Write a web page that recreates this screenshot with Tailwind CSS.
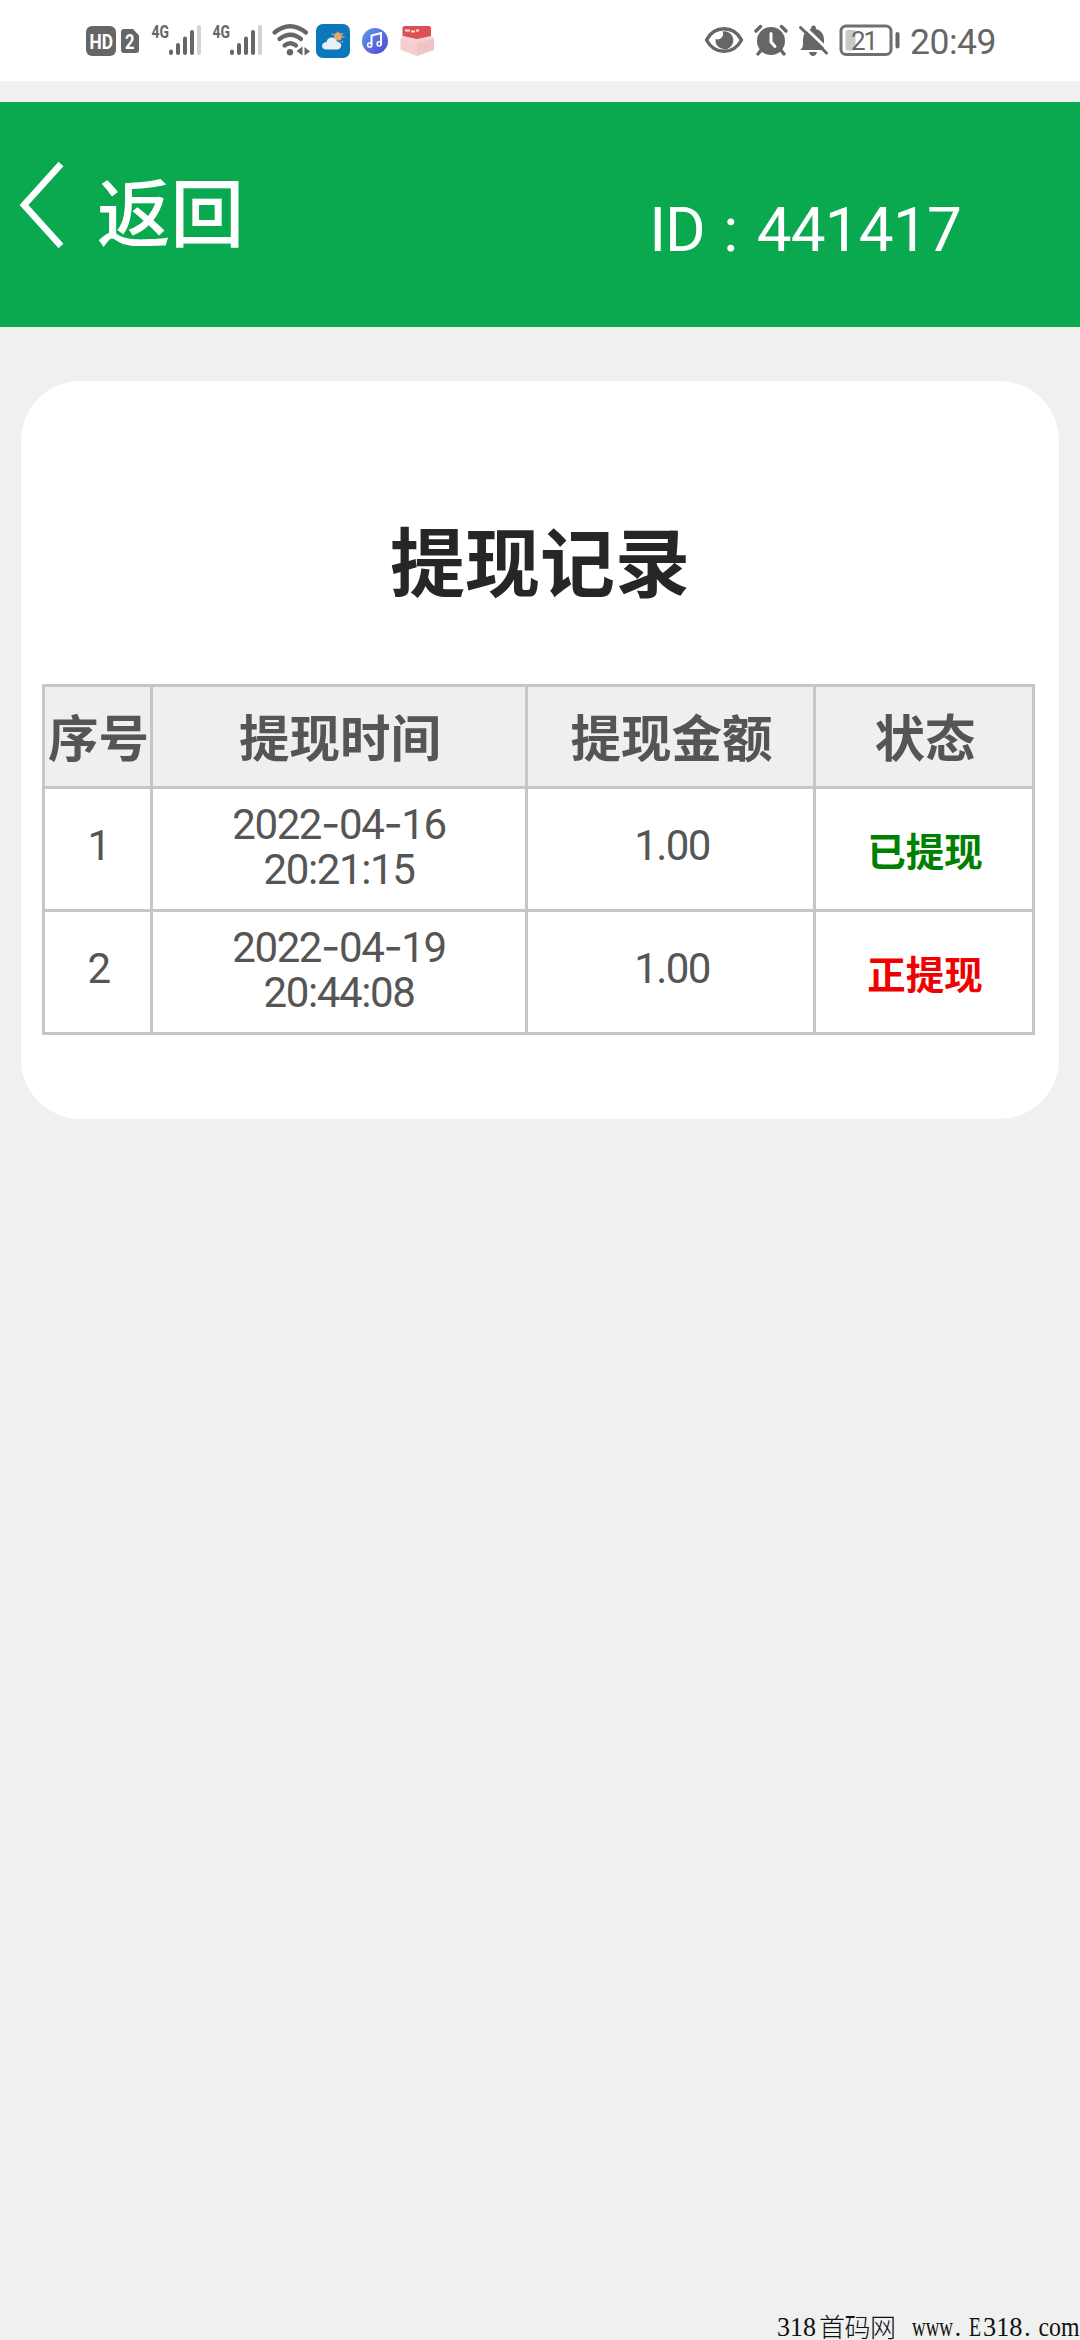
<!DOCTYPE html>
<html lang="zh-CN">
<head>
<meta charset="utf-8">
<title>提现记录</title>
<script src="https://cdn.jsdelivr.net/npm/@tailwindcss/browser@4"></script>
</head>
<body class="w-[1080px] h-[2340px] overflow-hidden bg-[#f0f0f0] flex flex-col font-[Roboto,'Noto_Sans_CJK_SC',sans-serif] text-[#555]">

<!-- Status bar -->
<div class="h-[81px] shrink-0 bg-white flex justify-between pt-[10px] pl-[80px] pr-[80px]">
  <div class="flex">
    <svg width="65" height="60" viewBox="80 10 65 60">
      <rect x="86" y="26" width="30" height="30" rx="6" fill="#666"/>
      <text x="89.500" y="48.500" font-size="19.500" font-weight="700" fill="#fff" textLength="23.500" lengthAdjust="spacingAndGlyphs">HD</text>
      <path d="M124 29h9l6 6.500V50a3 3 0 0 1-3 3h-12a3 3 0 0 1-3-3V32a3 3 0 0 1 3-3z" fill="#666"/>
      <text x="125" y="48.500" font-size="19.500" font-weight="700" fill="#fff" textLength="9.500" lengthAdjust="spacingAndGlyphs">2</text>
    </svg>
    <svg width="61" height="60" viewBox="145 10 61 60">
      <text x="151.500" y="38" font-size="17.500" font-weight="700" fill="#666" textLength="17.500" lengthAdjust="spacingAndGlyphs">4G</text>
      <g fill="#666"><rect x="169" y="49.500" width="4" height="5.500" rx="2"/><rect x="176" y="43" width="4" height="12" rx="2"/><rect x="183" y="36.500" width="4" height="18.500" rx="2"/><rect x="190" y="30" width="4" height="25" rx="2"/></g>
      <rect x="197" y="25" width="4" height="30" rx="2" fill="#d2d2d2"/>
    </svg>
    <svg width="61" height="60" viewBox="145 10 61 60">
      <text x="151.500" y="38" font-size="17.500" font-weight="700" fill="#666" textLength="17.500" lengthAdjust="spacingAndGlyphs">4G</text>
      <g fill="#666"><rect x="169" y="49.500" width="4" height="5.500" rx="2"/><rect x="176" y="43" width="4" height="12" rx="2"/><rect x="183" y="36.500" width="4" height="18.500" rx="2"/><rect x="190" y="30" width="4" height="25" rx="2"/></g>
      <rect x="197" y="25" width="4" height="30" rx="2" fill="#d2d2d2"/>
    </svg>
    <svg width="45" height="60" viewBox="267 10 45 60">
      <g fill="none" stroke="#666" stroke-width="4.200" stroke-linecap="round"><path d="M274.500 32.500q15.500-12.500 31.500 0"/><path d="M279.500 39q11-8.500 21.500 0"/><path d="M284.500 45.500q5.700-4.500 11.500 0"/></g>
      <circle cx="290" cy="52.300" r="3.200" fill="#666"/>
      <path d="M302.500 46.500v9l-6-4.500zM304.500 47l5.500 4.500-5.500 4z" fill="#666"/>
    </svg>
    <svg width="42" height="60" viewBox="312 10 42 60">
      <rect x="316" y="24" width="34" height="34" rx="7" fill="#0b77bd"/>
      <g stroke="#cfa57c" stroke-width="1.300"><path d="M338 31.500v2M332 33.500l1.500 1.500M343 33l-1.200 1.500M342.500 37h2M341.500 41l1.500 1.500"/></g>
      <circle cx="338" cy="36.500" r="4" fill="#e2a873"/>
      <path d="M326.500 49.500c-6 0-6-7 0-7.500 1-6 8.500-6 10.500-.5 6 .5 5.500 8 0 8z" fill="#e8f0f5"/>
    </svg>
    <svg width="40" height="60" viewBox="354 10 40 60">
      <defs><linearGradient id="note" x1="0" y1="0" x2="1" y2="1"><stop offset="0" stop-color="#5a9be8"/><stop offset="1" stop-color="#5547cf"/></linearGradient></defs>
      <circle cx="375" cy="41" r="13" fill="url(#note)"/>
      <path d="M371.500 45V35.500l9.500-2.500v11" fill="none" stroke="#fff" stroke-width="1.900"/>
      <circle cx="369.700" cy="45" r="2.100" fill="none" stroke="#fff" stroke-width="1.500"/><circle cx="379.200" cy="43.800" r="2.100" fill="none" stroke="#fff" stroke-width="1.500"/>
    </svg>
    <svg width="46" height="60" viewBox="394 10 46 60">
      <path d="M402.500 40V28q0-2 2-2h24.500q2 0 2 2v12z" fill="#dc5055"/>
      <path d="M405 30.500h5m1 1h4m1-1h3" stroke="#f8dcdc" stroke-width="1.800"/>
      <path d="M400.500 39l2.500-3 14 4.500v15.500l-16.500-6z" fill="#f4cfcf"/><path d="M434 39l-3-3-14 4.500v15.500l17-6z" fill="#efc4c5"/>
      <path d="M403 36l14 3 14-3 3 3-17 4-16.500-4z" fill="#f5d3d3"/>
    </svg>
  </div>
  <div class="flex">
    <svg width="47" height="60" viewBox="698 10 47 60">
      <path d="M704.500 40c8-15 27-15 35 0-8 15-27 15-35 0z" fill="none" stroke="#666" stroke-width="3.400" stroke-linejoin="round"/>
      <path d="M720.500 31.500a9 9 0 1 1-7 7.500 5.500 5.500 0 0 0 7-7.500z" fill="#666"/>
    </svg>
    <svg width="46" height="60" viewBox="745 10 46 60">
      <circle cx="769" cy="41" r="14" fill="#666"/>
      <path d="M754 31l4.500-4.500M784 31l-4.500-4.500" stroke="#666" stroke-width="3.400" stroke-linecap="round"/>
      <path d="M760 49l-4 5M778 49l4 5" stroke="#666" stroke-width="3.400" stroke-linecap="round"/>
      <path d="M769 33.500v8.500l4 4.500" fill="none" stroke="#fff" stroke-width="3" stroke-linecap="round" stroke-linejoin="round"/>
    </svg>
    <svg width="41" height="60" viewBox="791 10 41 60">
      <path d="M798 50c3-2 3-4 3-8 0-6 1-9 4-11q2-1.500 4-2 0-3.500 2.500-3.500t2.500 3.500c6 2 8 6 8 11v10z" fill="#666"/>
      <path d="M807 52h8q-1 4-4 4t-4-4z" fill="#666"/>
      <path d="M801 25.500l28 27" stroke="#fff" stroke-width="3"/>
      <path d="M798.500 27.500l26 25.500" stroke="#666" stroke-width="3" stroke-linecap="round"/>
    </svg>
    <svg width="74" height="60" viewBox="832 10 74 60">
      <rect x="839" y="26" width="50" height="28.500" rx="5" fill="#fff" stroke="#707070" stroke-width="3"/>
      <rect x="843.500" y="30" width="10" height="20.500" rx="2" fill="#c8c8c8"/>
      <text x="849" y="49.500" font-size="26" font-weight="400" fill="#666" textLength="27" lengthAdjust="spacing">21</text>
      <rect x="893.500" y="32" width="4" height="16.500" rx="2" fill="#666"/>
    </svg>
    <div class="w-[92px] pl-[2px] pt-[12px] text-[35.5px] leading-[40px] text-[#666] tracking-[-0.5px] whitespace-nowrap">20:49</div>
  </div>
</div>

<!-- Header -->
<header class="mt-[21px] h-[225px] shrink-0 bg-[#0aa84f] text-white flex items-start">
  <svg class="ml-[18px] mt-[54px]" width="50" height="98" viewBox="18 156 50 98" fill="none" stroke="#fff" stroke-width="6.500"><path d="M61 164L24 205l37 41"/></svg>
  <div class="ml-[29px] mt-[69px] text-[73.5px] leading-[90px] font-medium">返回</div>
  <div class="ml-auto mr-[119px] mt-[92px] text-[62px] leading-[72px] flex">
    <span class="tracking-[-1px]">ID</span><span class="w-[52px] text-center">:</span><span class="tracking-[-0.8px]">441417</span>
  </div>
</header>

<!-- Records card -->
<main class="mt-[54px] mx-[21px] h-[738px] shrink-0 rounded-[60px] bg-white px-[21px]">
  <h1 class="pt-[134px] h-[303px] text-[75px] leading-[100px] font-bold text-center text-[#262626]">提现记录</h1>
  <table class="w-[993px] border-separate border-spacing-0 table-fixed border-t-3 border-l-3 border-[#c6c6c6] text-center">
    <colgroup><col class="w-[108px]"><col class="w-[375px]"><col class="w-[288px]"><col class="w-[219px]"></colgroup>
    <thead>
      <tr class="h-[102px] bg-[#efefef] text-[50.5px] leading-[60px] font-bold whitespace-nowrap">
        <th class="border-r-3 border-b-3 border-[#c6c6c6] p-0 pt-[7px] pl-[2px]">序号</th>
        <th class="border-r-3 border-b-3 border-[#c6c6c6] p-0 pt-[7px] pl-[2px]">提现时间</th>
        <th class="border-r-3 border-b-3 border-[#c6c6c6] p-0 pt-[7px] pl-[2px]">提现金额</th>
        <th class="border-r-3 border-b-3 border-[#c6c6c6] p-0 pt-[7px] pl-[2px]">状态</th>
      </tr>
    </thead>
    <tbody class="text-[42px] leading-[45px] tracking-[-1.4px]">
      <tr class="h-[123px]">
        <td class="border-r-3 border-b-3 border-[#c6c6c6] p-0 pb-[7px] pl-[2px]">1</td>
        <td class="border-r-3 border-b-3 border-[#c6c6c6] p-0 pb-[5px]">2022<span class="font-[Inter]">-</span>04<span class="font-[Inter]">-</span>16<br>20:21:15</td>
        <td class="border-r-3 border-b-3 border-[#c6c6c6] p-0 pb-[7px] pl-[3px] tracking-[-1.6px]">1.00</td>
        <td class="border-r-3 border-b-3 border-[#c6c6c6] p-0 pt-[6px] pl-[2px] text-[38.5px] tracking-normal font-bold text-[#008000]">已提现</td>
      </tr>
      <tr class="h-[123px]">
        <td class="border-r-3 border-b-3 border-[#c6c6c6] p-0 pb-[7px] pl-[2px]">2</td>
        <td class="border-r-3 border-b-3 border-[#c6c6c6] p-0 pb-[5px]">2022<span class="font-[Inter]">-</span>04<span class="font-[Inter]">-</span>19<br>20:44:08</td>
        <td class="border-r-3 border-b-3 border-[#c6c6c6] p-0 pb-[7px] pl-[3px] tracking-[-1.6px]">1.00</td>
        <td class="border-r-3 border-b-3 border-[#c6c6c6] p-0 pt-[6px] pl-[2px] text-[38.5px] tracking-normal font-bold text-[#f00000]">正提现</td>
      </tr>
    </tbody>
  </table>
</main>

<!-- Site credit -->
<footer class="mt-auto flex justify-end">
  <svg width="310" height="40" viewBox="770 2300 310 40" fill="#111" class="font-['Liberation_Serif','Noto_Sans_CJK_SC',serif]" font-size="27">
    <text x="777" y="2335.500" textLength="39" lengthAdjust="spacingAndGlyphs">318</text>
    <text x="819" y="2336.500" font-size="26" font-weight="300" textLength="77" lengthAdjust="spacing">首码网</text>
    <text x="912" y="2335.500" textLength="41" lengthAdjust="spacingAndGlyphs">www</text>
    <text x="954.500" y="2335.500">.</text>
    <text x="969" y="2335.500" textLength="12" lengthAdjust="spacingAndGlyphs">E</text>
    <text x="983" y="2335.500" textLength="39.500" lengthAdjust="spacingAndGlyphs">318</text>
    <text x="1024" y="2335.500">.</text>
    <text x="1038.500" y="2335.500" textLength="41" lengthAdjust="spacingAndGlyphs">com</text>
  </svg>
</footer>
</body>
</html>
